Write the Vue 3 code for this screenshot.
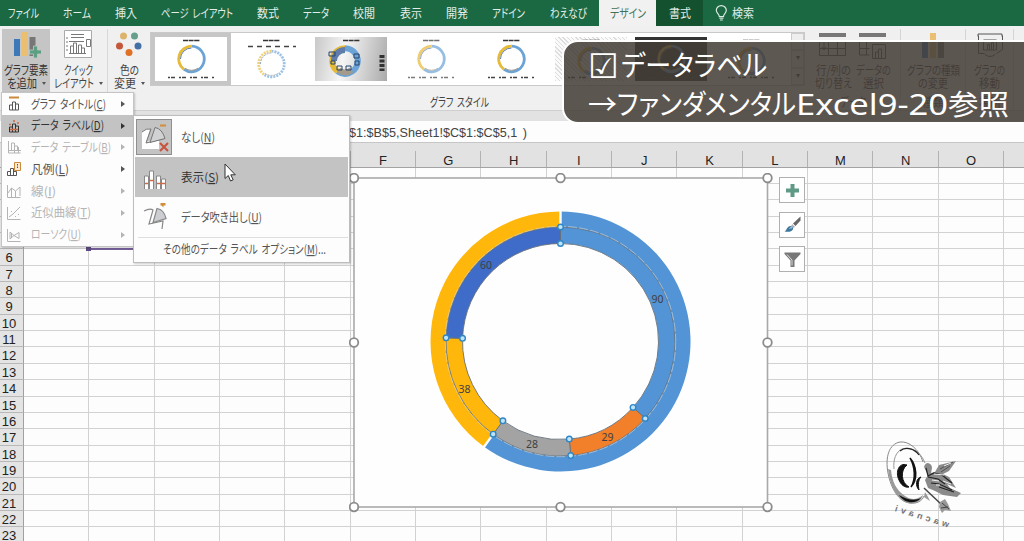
<script setup>
import { h } from 'vue'

/**
 * Texte condensé ou étiré à une largeur fixe, avec touche d'accès soulignée
 */
function FitText(props) {
  const content = [props.text]
  if (props.accel) {
    content.push('(', h('tspan', { 'text-decoration': 'underline' }, props.accel), ')')
  }
  if (props.suffix) content.push(props.suffix)
  return h('svg', { class: 'fit', width: props.w, style: 'height:1.4em;overflow:visible;display:block;flex:none' }, [
    h('text', { x: 0, y: '1.08em', fill: 'currentColor', textLength: props.w, lengthAdjust: 'spacingAndGlyphs' }, content),
  ])
}
FitText.props = ['text', 'w', 'accel', 'suffix']

const tabs = [
  { text: 'ファイル', w: 31 },
  { text: 'ホーム', w: 28 },
  { text: '挿入', w: 22 },
  { text: 'ページ レイアウト', w: 72 },
  { text: '数式', w: 22 },
  { text: 'データ', w: 26 },
  { text: '校閲', w: 22 },
  { text: '表示', w: 22 },
  { text: '開発', w: 22 },
  { text: 'アドイン', w: 33 },
  { text: 'わえなび', w: 37 },
  { text: 'デザイン', w: 36, state: 'active' },
  { text: '書式', w: 22, state: 'context' },
]

const styles = [
  { kind: 'selected', cy: 26 },
  { kind: 'striped', cy: 31 },
  { kind: 'silver', cy: 28 },
  { kind: 'soft', cy: 26 },
  { kind: 'plain', cy: 26 },
  { kind: 'hatched', cy: 28 },
  { kind: 'dark', cy: 26 },
  { kind: 'blue', cy: 28 },
]

const menuItems = [
  { id: 'title', text: 'グラフ タイトル', accel: 'C', w: 75 },
  { id: 'labels', text: 'データ ラベル', accel: 'D', w: 73, active: true },
  { id: 'table', text: 'データ テーブル', accel: 'B', w: 80, disabled: true },
  { id: 'legend', text: '凡例', accel: 'L', w: 38 },
  { id: 'lines', text: '線', accel: 'I', w: 25, disabled: true },
  { id: 'trend', text: '近似曲線', accel: 'T', w: 60, disabled: true },
  { id: 'candle', text: 'ローソク', accel: 'U', w: 50, disabled: true },
]

// Les cinq premières colonnes et lignes sont sous les menus ouverts
const columns = ['', '', '', '', '', ...'FGHIJKLMNO', '']
const rows = Array.from({ length: 23 }, (_, i) => (i < 5 ? '' : i + 1))

// Graphique en anneau : centre et rayons dans le repère du cadre
const cx = 206.5
const cy = 163.5

function point(r, deg) {
  const a = (deg * Math.PI) / 180
  return [cx + r * Math.sin(a), cy - r * Math.cos(a)]
}

function sector(r1, r2, from, to) {
  const large = to - from > 180 ? 1 : 0
  return `M${point(r2, from)} A${r2} ${r2} 0 ${large} 1 ${point(r2, to)} L${point(r1, to)} A${r1} ${r1} 0 ${large} 0 ${point(r1, from)}Z`
}

const values = [
  { v: 90, color: '#5294d5', x: 303.5, y: 121 },
  { v: 29, color: '#f27f2a', x: 253.5, y: 259 },
  { v: 28, color: '#a3a3a3', x: 178, y: 266 },
  { v: 38, color: '#ffb70b', x: 110.5, y: 211 },
  { v: 60, color: '#3f6cc8', x: 132, y: 87 },
]
const total = 245
let start = 0
const slices = values.map((s) => {
  const from = start
  start += (s.v / total) * 360
  return { ...s, from, d: sector(98, 114.5, from, start) }
})
const outer = [
  { d: sector(114.5, 130, 0, 216), color: '#5294d5' },
  { d: sector(114.5, 130, 216, 360), color: '#ffb70b' },
]
const handles = slices.flatMap((s) => [point(98, s.from), point(114.5, s.from)])
const gaps = [0, 216].map((a) => [point(116, a), point(131, a)])
const frameHandles = [
  [0, 0], [206.5, 0], [413.5, 0], [0, 164.5], [413.5, 164.5], [0, 329], [206.5, 329], [413.5, 329],
]
</script>

<template>
  <div class="app">
    <nav class="tabs">
      <div v-for="tab in tabs" :key="tab.text" class="tab" :class="tab.state">
        <FitText :text="tab.text" :w="tab.w" />
      </div>
      <div class="search">
        <svg width="13" height="16" viewBox="0 0 13 16" fill="none" stroke="#dcebe2" stroke-width="1.2">
          <path d="M4.3 11.5C4.3 8.8 1.3 8.300 1.300 5.300a5 4.700 0 0 1 10 0C11.300 8.300 8.500 8.800 8.500 11.500Z" />
          <path d="M4.300 13.200h4.200M5 15h2.800" />
        </svg>
        <FitText text="検索" :w="22" />
      </div>
    </nav>

    <section class="ribbon">
      <div class="big-button pressed">
        <svg width="30" height="30" viewBox="0 0 30 30">
          <path d="M3 10h6v17h-6z" fill="#3d78b8" />
          <path d="M11 3h6v24h-6z" fill="#eabf72" />
          <path d="M18.500 8h6v19h-6z" fill="#777" />
          <path d="M22.500 17h4v4h4v4h-4v4h-4v-4h-4v-4h4z" fill="#5ba081" stroke="#c6c6c6" stroke-width=".8" />
        </svg>
        <FitText text="グラフ要素" :w="44" />
        <div class="line"><FitText text="を追加" :w="30" /><i class="caret"></i></div>
      </div>
      <div class="big-button quick">
        <svg width="30" height="30" viewBox="0 0 30 30" fill="none" stroke="#777">
          <path d="M1.500 1.500h27v27h-27z" fill="#fff" stroke="#aaa" />
          <path d="M8 5.500h13M8 8.500h13" />
          <path d="M4 8v16" stroke-dasharray="2 2" />
          <path d="M6 24.500h17M7.500 24v-7h3v7M10.500 24v-10h3v10M15.500 24v-8h3v8M18.500 24v-5h3v5M6 12.500h15M23.500 10.500h4v7h-4z" />
        </svg>
        <FitText text="クイック" :w="29" />
        <div class="line"><FitText text="レイアウト" :w="40" /><i class="caret"></i></div>
      </div>
      <div class="big-button colors">
        <svg width="30" height="30" viewBox="0 0 30 30">
          <circle cx="9.500" cy="7" r="3.500" fill="#dcb36c" />
          <circle cx="20.500" cy="7" r="3.500" fill="#66a08d" />
          <circle cx="5.500" cy="17" r="3.500" fill="#c4583a" />
          <circle cx="24" cy="17" r="3.500" fill="#4470a5" />
          <circle cx="15" cy="23.500" r="3.500" fill="#df7125" />
        </svg>
        <FitText text="色の" :w="19" />
        <div class="line"><FitText text="変更" :w="22" /><i class="caret"></i></div>
      </div>
      <div class="gallery-group">
        <div class="gallery">
          <div v-for="s in styles" :key="s.kind" class="thumb" :class="s.kind">
            <svg width="80" height="52" viewBox="0 0 80 52" fill="none">
              <path d="M32 7.500h17" stroke="#333" stroke-width="1.600" stroke-dasharray="5 .6" />
              <path v-if="s.kind === 'silver'" d="M71 22v16" stroke="#333" stroke-width="5" stroke-dasharray="3 1.500" />
              <path v-else-if="s.kind === 'striped'" d="M17 13.500h48" stroke="#444" stroke-width="1.500" stroke-dasharray="5 4" />
              <path v-else d="M17 44.500h47" stroke="#444" stroke-width="1.500" stroke-dasharray="2 1 4 4" />
              <g class="ring" :transform="`translate(${s.kind === 'silver' ? 34 : 40.500} ${s.cy})`">
                <path d="M0-12.800A12.800 12.800 0 1 1-7.500 10.400" stroke="#6ba3d6" stroke-width="2.800" />
                <path d="M-7.500 10.400A12.800 12.800 0 0 1 0-12.800" stroke="#e6b936" stroke-width="2.800" />
                <path d="M-11 0A11 11 0 0 1 0-11" stroke="#5f7cab" stroke-width="1" />
                <path d="M-6.500 9.200A11 11 0 0 0 6.500 9.200" stroke="#a39a8a" stroke-width="1" />
              </g>
              <g v-if="s.kind === 'silver'" stroke="#26446b" stroke-width="1">
                <path d="M18 19h6v4h-6zM43 21h5v4h-5zM48 28h-4v4h4zM35 33h5v4h-5zM26 33h5v4h-5zM20 28h4v3h-4z" />
              </g>
            </svg>
          </div>
          <div class="scroller"><span></span><span>▾</span><span>▾</span></div>
        </div>
        <FitText class="group-name" text="グラフ スタイル" :w="59" />
      </div>
      <div class="group data-group">
        <div class="group-row">
          <div class="big-button">
            <svg width="30" height="30" viewBox="0 0 30 30" fill="none" stroke="#555">
              <path d="M1 4h27v4h-27z" fill="#777" stroke="none" />
              <path d="M1.500 12.500h26v14h-26zM1.500 19.500h26M10.500 12.500v14M19.500 12.500v14M6 13v8l-2-3m2 3 2-3" />
            </svg>
            <FitText text="行/列の" :w="35" />
            <FitText text="切り替え" :w="37" />
          </div>
          <div class="big-button">
            <svg width="30" height="30" viewBox="0 0 30 30" fill="none" stroke="#555">
              <path d="M1 4h27v4h-27z" fill="#777" stroke="none" />
              <path d="M1.500 12v14h10M1.500 19.500h10M8.500 12v14M14.500 15.500h13v14h-13zM17.500 29v-6h3v6M20.500 29v-9h3v9" />
            </svg>
            <FitText text="データの" :w="35" />
            <FitText text="選択" :w="21" />
          </div>
        </div>
        <FitText class="group-name" text="データ" :w="26" />
      </div>
      <div class="group type-group">
        <div class="big-button">
          <svg width="30" height="30" viewBox="0 0 30 30">
            <path d="M4 12h6v17h-6z" fill="#3d78b8" />
            <path d="M12 4h6v25h-6z" fill="#eabf72" />
            <path d="M20 12h6v17h-6z" fill="#777" />
          </svg>
          <FitText text="グラフの種類" :w="53" />
          <FitText text="の変更" :w="30" />
        </div>
        <FitText class="group-name" text="種類" :w="22" />
      </div>
      <div class="group place-group">
        <div class="big-button">
          <svg width="30" height="30" viewBox="0 0 30 30" fill="none" stroke="#555">
            <path d="M3 7.500v-2.500h24v2.500M3.500 6.500v18h6M27.500 6.500v14l-6 4M8.500 11h13v10h-13zM12.500 20.500v-5h2v5M16.500 20.500v-7h2v7M10 25.500q5 4 10 0" />
          </svg>
          <FitText text="グラフの" :w="31" />
          <FitText text="移動" :w="21" />
        </div>
        <FitText class="group-name" text="場所" :w="22" />
      </div>
    </section>

    <div class="formula-bar">
      <FitText text="$1:$B$5,Sheet1!$C$1:$C$5,1 )" :w="178" />
    </div>

    <main class="sheet">
      <div class="row col-heads">
        <div class="row-head"></div>
        <div v-for="(c, i) in columns" :key="i" class="col-head">{{ c }}</div>
      </div>
      <div v-for="(r, j) in rows" :key="j" class="row">
        <div class="row-head">{{ r }}</div>
        <div v-for="(c, i) in columns" :key="i" class="cell"></div>
      </div>
      <div class="range-edge"></div>

      <svg class="chart" width="424" height="340" viewBox="-5 -5 424 340">
        <rect x="0" y="0" width="413.500" height="329" fill="#fefefe" stroke="#a9a9a9" stroke-width="1.600" />
        <path v-for="o in outer" :key="o.color" :d="o.d" :fill="o.color" />
        <path v-for="s in slices" :key="s.v" :d="s.d" :fill="s.color" stroke="#66727c" stroke-width=".9" />
        <circle :cx="cx" :cy="cy" r="115.200" class="dash" />
        <line v-for="(g, i) in gaps" :key="i" :x1="g[0][0]" :y1="g[0][1]" :x2="g[1][0]" :y2="g[1][1]" stroke="#fff" stroke-width="2.400" />
        <circle v-for="(p, i) in handles" :key="'h' + i" :cx="p[0]" :cy="p[1]" r="2.800" class="point" />
        <text v-for="s in slices" :key="'t' + s.v" :x="s.x" :y="s.y + 3.500" class="value">{{ s.v }}</text>
        <circle v-for="(p, i) in frameHandles" :key="'f' + i" :cx="p[0]" :cy="p[1]" r="4.300" class="grip" />
      </svg>

      <div class="chart-tools">
        <div class="tool">
          <svg width="17" height="17" viewBox="0 0 17 17"><path d="M6.500 2h4v4.500H15v4h-4.500V15h-4v-4.500H2v-4h4.500z" fill="#5f9a86" /></svg>
        </div>
        <div class="tool">
          <svg width="17" height="17" viewBox="0 0 17 17">
            <path d="M16.500.5v4L11.500 10 9 7.500z" fill="#666" />
            <path d="M8.300 8.200l2.500 2.500-1 1.200-2.600-2.500z" fill="#aaa" />
            <path d="M.5 15.500C3 14.500 2.500 10.500 6.500 10c2 .3 3 2 2.500 3.200-1.500 3-5 2.800-8.500 2.300z" fill="#3e789f" />
            <path d="M5.500 12.500q1.500-1.500 2.500-.5" stroke="#d5e5ef" fill="none" />
          </svg>
        </div>
        <div class="tool">
          <svg width="17" height="17" viewBox="0 0 17 17">
            <path d="M.5 1.500h16v1.500L10.500 9.500V16h-4V9.500L.5 3z" fill="#777" />
            <path d="M3 3.500l5 5.500v5.500" stroke="#ddd" fill="none" />
          </svg>
        </div>
      </div>

      <svg class="logo" width="80" height="95" viewBox="0 0 80 95" fill="none">
        <path d="M41 24C37 11 27 3 18 4C7 6 3 19 6 35C9 51 17 64 28 65C35 66 40 63 42 58" stroke="#888" stroke-width="1" />
        <path d="M6 31C8 50 17 64 28 65.500C35 66 40 62 41 57C35 62 29 62 23 58C14 52 10 43 9 32Z" fill="#999" />
        <path d="M17 57C22 65 33 67 39 60C33 63 25 62 17 57Z" fill="#111" />
        <path d="M43 25C39 14 29 8 20 11C14 14 11 21 12 31" stroke="#999" stroke-width="1" />
        <path d="M18 13C24 8 33 11 37 17" stroke="#222" stroke-width="1.300" />
        <path d="M25 27C17 24 13 34 17 42C19 47 23 50 27 49C19 45 18 32 25 27Z" fill="#111" stroke="#111" />
        <path d="M28 20C35 28 36 42 29 49C34 41 33 29 28 20Z" fill="#111" stroke="#111" stroke-width="1.500" />
        <path d="M39 39C34 40 33 48 37 52C36 47 36 42 39 39Z" fill="#111" stroke="#111" />
        <path d="M42 29q1-4 4-4 4 1 4 5l-1 5 4-1 4-7 17-4-7 10-6 3 6 3 7 11-9-4 3 4 11 5-4 4-14-2-8-4-7-3-3-8 3-5z" fill="#8a8a8a" />
        <path d="M44 30l2 8 6-3 8 2 10 8M46 39l10 2 7 5M49 45l8 1 13 6M57 49l15 5" stroke="#222" stroke-width="1.200" />
        <path d="M58 31l13-7M59 34l9-6" stroke="#444" stroke-width=".8" />
        <path d="M52 36l10 1M50 42l7 1M61 43l8 3M54 47l4 0M62 28l7-3" stroke="#eee" />
        <path d="M42 50L60 67" stroke="#444" stroke-width="1.500" />
        <path d="M43 54l3 5 2 4-6-4zM58 64l5-3 3 5 3 7-6-1-3 3-3-6z" fill="#999" />
        <path d="M60 65l7 6M59 70l7-1" stroke="#444" />
        <text transform="translate(66 89.500) rotate(17) scale(-1 1)" textLength="56" class="logo-text">wacnavi</text>
      </svg>
    </main>

    <div class="menu">
      <div v-for="m in menuItems" :key="m.id" class="menu-item" :class="{ active: m.active, disabled: m.disabled }">
        <svg width="16" height="16" viewBox="0 0 16 16" fill="none" stroke="currentColor">
          <template v-if="m.id === 'title'">
            <path d="M3 1.500h10" stroke="#c98a3c" stroke-width="2" />
            <path d="M3.500 14v-5h3v5zM6.500 14v-8h3v8zM9.500 14v-6h3v6z" />
          </template>
          <template v-else-if="m.id === 'labels'">
            <path d="M3.500 14v-5h3v5zM6.500 14v-8h3v8zM9.500 14v-6h3v6z" />
            <path d="M3 6.500h2M7 3h2M11 5h2M4 11.500h8" stroke="#c96a3c" stroke-width="1.500" />
          </template>
          <path v-else-if="m.id === 'table'" d="M2.500 2v12h12M5.500 11v-7h3v7M8.500 11v-4h3v4M2 11.500h13M12.500 8v6M8.500 11v3" />
          <template v-else-if="m.id === 'legend'">
            <path d="M8.500 1.500h6v8h-6z" stroke="#c98a3c" fill="#fbe9d2" />
            <path d="M11.500 3v5" stroke-dasharray="1.500 1" />
            <path d="M1.500 14.500v-4h3v4zM4.500 14.500v-7h3v7zM7.500 14.500v-4h3v4z" fill="#fff" />
          </template>
          <path v-else-if="m.id === 'lines'" d="M1.500 2v12.500h13M2 10l3.500-5 4 3 4.500-4v9M5.500 5v9M9.500 8v6" />
          <path v-else-if="m.id === 'trend'" d="M1.500 2v12.500h13M3 12l4-3 7-7M5 6.500h1M9 11.500h1M12 9.500h1" />
          <path v-else d="M1.500 2v12.500h13M4 5v7l4-3.500zM8 8.500l5-3v6zM5.500 6v5" />
        </svg>
        <FitText :text="m.text" :accel="m.accel" :w="m.w" />
        <i class="arrow"></i>
      </div>
    </div>

    <div class="submenu">
      <div class="sub-item">
        <div class="sub-icon checked">
          <svg width="32" height="32" viewBox="0 0 32 32" fill="none">
            <path d="M4 28v-17q4-4 8-3l-4 13 13-3v10z" fill="#fff" />
            <path d="M4 11q4-4 9-3l-5 14 17-4" stroke="#777" />
            <path d="M17 6.500q7 1 10 11l-15 4z" fill="#d0d2d4" stroke="#777" />
            <path d="M22 4.500h6" stroke="#d08d3c" stroke-width="2" />
            <path d="M22 22l8 8M30 22l-8 8" stroke="#c9513b" stroke-width="2" />
          </svg>
        </div>
        <FitText text="なし" accel="N" :w="34" />
      </div>
      <div class="sub-item active">
        <div class="sub-icon">
          <svg width="32" height="32" viewBox="0 0 32 32" fill="#fff" stroke="#888">
            <path d="M6.500 28v-13h4v13M11.500 28v-18h4v18M18.500 28v-13h4v13M23.500 28v-10h4v10" />
            <path d="M7 22.500h3M11 19.500h5M19 22.500h9" stroke="#cf6c45" stroke-width="1.500" />
          </svg>
        </div>
        <FitText text="表示" accel="S" :w="38" />
      </div>
      <div class="sub-item">
        <div class="sub-icon">
          <svg width="32" height="32" viewBox="0 0 32 32" fill="none" stroke="#888" stroke-width="1.200">
            <path d="M6 10q6-3 9-1l-4 14 14-3-1 8" />
            <path d="M19 7.500q7 1 9 10l-13 4z" fill="#ccced1" />
            <path d="M22.500 2h5v2.500h-2v2l-2-2h-1z" fill="#d08d3c" stroke="none" />
          </svg>
        </div>
        <FitText text="データ吹き出し" accel="U" :w="81" />
      </div>
      <div class="more">
        <FitText text="その他のデータ ラベル オプション" accel="M" suffix="..." :w="163" />
      </div>
    </div>

    <svg class="cursor" width="13" height="20" viewBox="0 0 13 20">
      <path d="M1 1v14.500l3.300-3L6.500 18l2.700-1.200-2.400-5h4.500z" fill="#fff" stroke="#333" />
    </svg>

    <div class="banner">
      <div class="line"><FitText class="check" text="☑" :w="31" /><FitText text="データラベル" :w="146" /></div>
      <div class="line">
        <FitText class="to" text="→" :w="29" />
        <FitText text="ファンダメンタル" :w="179" />
        <FitText class="latin" text="Excel9-20" :w="152" />
        <FitText text="参照" :w="61" />
      </div>
    </div>
  </div>
</template>

<style>
body {
  overflow: hidden;
}
</style>

<style scoped>
.app {
  position: relative;
  display: flex;
  flex-direction: column;
  width: 1024px;
  height: 541px;
  overflow: hidden;
  background: #fdfdfd;
  color: #444;
  font-family: 'Noto Sans CJK JP', sans-serif;
  font-size: 12px;
  font-feature-settings: 'palt';
  word-spacing: 2px;
}

.tabs {
  display: grid;
  grid-template-columns: 51px 52px 46px 96px 46px 50px 46px 47px 46px 57px 62px 57px 47px 1fr;
  flex: none;
  height: 26px;
  background: #1a6943;
  color: #e3eee8;
}

.tab {
  display: flex;
  align-items: center;
  justify-content: center;
}

.tab:first-child {
  padding-right: 4px;
}

.tab.active {
  background: #f1f1f1;
  color: #3f7258;
}

.tab.context {
  background: #14522f;
}

.search {
  display: flex;
  align-items: center;
  gap: 4px;
  padding-left: 12px;
}

.ribbon {
  display: flex;
  box-sizing: border-box;
  flex: none;
  height: 85px;
  padding: 3px 0 0 2px;
  border-bottom: 1px solid #cfcfcf;
  background: #f0f0f0;
}

.big-button {
  display: flex;
  flex-direction: column;
  align-items: center;
  height: 63px;
}

.big-button > svg:first-child {
  margin-bottom: 3px;
  flex: none;
}

.big-button > .fit + .fit,
.big-button > .line {
  margin-top: -4px;
}

.line {
  display: flex;
  align-items: center;
}

.pressed {
  width: 48px;
  background: #c5c5c5;
  color: #333;
}

.quick {
  width: 56px;
  padding-right: 1px;
  border-right: 1px solid #d8d8d8;
}

.colors {
  width: 42px;
}

.caret {
  margin-left: 5px;
  border: 2.500px solid transparent;
  border-top: 3px solid #555;
  border-bottom: 0;
}

.gallery-group {
  display: flex;
  flex-direction: column;
  align-items: center;
  width: 655px;
  padding-top: 3px;
}

.gallery {
  display: flex;
  box-sizing: border-box;
  width: 655px;
  height: 54px;
  border: 1px solid #c9c9c9;
  background: #fff;
  margin-bottom: 8px;
}

.gallery-group > .group-name {
  margin-right: 37px;
}

.thumb {
  box-sizing: border-box;
  width: 80px;
  height: 52px;
  flex: none;
}

.thumb svg {
  display: block;
}

.selected {
  box-shadow: inset 0 0 0 4px #c6c6c6;
}

.silver {
  background: linear-gradient(100deg, #c8c8c8, #f5f5f5 40%, #aaa) 4px 4px / 72px 44px no-repeat;
}

.striped .ring {
  opacity: 0.65;
  stroke-dasharray: 2 1;
}

.soft svg {
  opacity: 0.7;
}

.silver .ring path {
  stroke-width: 6px;
}

.hatched {
  background: repeating-linear-gradient(45deg, #ddd 0 1px, #fafafa 1px 3px) 4px 4px / 72px 44px no-repeat;
}

.dark {
  background: linear-gradient(#333, #333) 4px 4px / 72px 44px no-repeat;
}

.scroller {
  display: flex;
  flex-direction: column;
  width: 13px;
  font-size: 8px;
}

.scroller span {
  flex: 1;
  border: 1px solid #ccc;
  background: #eee;
  text-align: center;
}

.group {
  display: flex;
  flex-direction: column;
  align-items: center;
  justify-content: space-between;
  height: 82px;
  border-right: 1px solid #d5d5d5;
}

.group-row {
  display: flex;
  gap: 4px;
}

.data-group {
  width: 95px;
}

.type-group {
  width: 64px;
}

.place-group {
  width: 47px;
}

.formula-bar {
  box-sizing: border-box;
  flex: none;
  height: 32px;
  padding: 2px 0 0 349px;
  border-top: 10px solid #e2e2e2;
  border-bottom: 1px solid #c6c6c6;
  background: #fdfdfd;
  font-family: 'Liberation Sans', sans-serif;
  font-size: 12.500px;
}

.sheet {
  position: relative;
  flex: none;
}

.row {
  display: flex;
  width: 1080px;
  height: 16.360px;
}

.col-heads {
  height: 24.500px;
  background: #e2e2e2;
  border-bottom: 1px solid #a3a3a3;
  box-sizing: border-box;
}

.row-head {
  box-sizing: border-box;
  width: 24px;
  padding: 1px 5px 0 0;
  border-right: 1px solid #a0a0a0;
  border-bottom: 1px solid #b8b8b8;
  background: #e3e4e3;
  color: #222;
  font: 13px/16px 'Liberation Sans', sans-serif;
  text-align: center;
}

.col-heads .row-head {
  border: 0;
}

.col-head,
.cell {
  box-sizing: border-box;
  width: 65.350px;
  border-right: 1px solid #d2d2d2;
}

.cell {
  border-bottom: 1px solid #d2d2d2;
}

.col-head {
  padding-top: 8px;
  border-right: 1px solid;
  border-image: linear-gradient(transparent 35%, #b2b2b2 35%) 1;
  color: #222;
  font: 13px/20px 'Liberation Sans', sans-serif;
  text-align: center;
}

.range-edge {
  position: absolute;
  top: 105px;
  left: 86px;
  width: 60px;
  height: 2px;
  background: #76609a;
}

.range-edge::before {
  content: '';
  position: absolute;
  top: -1px;
  left: 0;
  width: 5px;
  height: 4px;
  background: #5c4a80;
}

.chart {
  position: absolute;
  top: 30px;
  left: 349px;
}

.dash {
  fill: none;
  stroke: #d8dee2;
  stroke-width: 0.7px;
  stroke-dasharray: 9 2;
  opacity: 0.8;
}

.point {
  fill: #bfe4f7;
  stroke: #2f86c6;
  stroke-width: 1.400px;
}

.value {
  fill: #404040;
  font: 10.500px 'Noto Sans', sans-serif;
  text-anchor: middle;
}

.grip {
  fill: #fff;
  stroke: #8c8c8c;
  stroke-width: 1.800px;
}

.chart-tools {
  position: absolute;
  top: 34px;
  left: 779px;
  display: flex;
  flex-direction: column;
  gap: 8.500px;
}

.tool {
  display: flex;
  align-items: center;
  justify-content: center;
  width: 24px;
  height: 24px;
  border: 1px solid #b0b0b0;
  background: #fff;
}

.logo {
  position: absolute;
  top: 295px;
  left: 882px;
}

.logo-text {
  fill: #777;
  font: bold 9px 'Liberation Sans', sans-serif;
}

.menu {
  position: absolute;
  top: 92px;
  left: 1px;
  width: 131px;
  border: 1px solid #c4c4c4;
  background: #fdfdfd;
  box-shadow: 1px 1px 2px rgba(0, 0, 0, 0.2);
  color: #555;
}

.menu-item {
  display: flex;
  align-items: center;
  height: 21.800px;
  padding-left: 4px;
}

.menu-item > svg:first-child {
  flex: none;
  margin-right: 9px;
}

.menu-item.active,
.sub-item.active {
  background: #c3c3c3;
  color: #333;
}

.menu-item.disabled {
  color: #b4b4b4;
}

.arrow {
  margin: 0 8px 0 auto;
  border: 3px solid transparent;
  border-left: 4px solid currentColor;
  border-right: 0;
}

.submenu {
  position: absolute;
  top: 115px;
  left: 133px;
  box-sizing: border-box;
  width: 217px;
  height: 148px;
  padding: 1px;
  border: 1px solid #bdbdbd;
  background: #fdfdfd;
  box-shadow: 1px 1px 2px rgba(0, 0, 0, 0.2);
  color: #555;
}

.sub-item {
  display: flex;
  align-items: center;
  gap: 9px;
  height: 40px;
  padding-left: 1px;
}

.sub-icon {
  padding: 2px;
  line-height: 0;
}

.checked {
  padding: 1px;
  border: 1px solid #8f8f8f;
  background: #c3c3c3;
}

.more {
  display: flex;
  align-items: center;
  height: 23px;
  margin-left: 3px;
  padding-left: 25px;
  border-top: 1px solid #dedede;
}

.cursor {
  position: absolute;
  top: 163px;
  left: 224px;
}

.banner {
  position: absolute;
  top: 40px;
  left: 562px;
  box-sizing: border-box;
  width: 480px;
  height: 84px;
  padding: 3px 0 0 24px;
  border: 2px solid #fff;
  border-radius: 16px;
  background: rgba(67, 60, 55, 0.86);
  color: #fff;
  font-size: 28.500px;
}

.banner .line {
  height: 39px;
}

.banner .check {
  margin-right: 2px;
  font-family: 'DejaVu Sans', sans-serif;
  font-size: 34px;
}

.banner .latin {
  font-family: 'Noto Sans', sans-serif;
  font-size: 29.500px;
}

.banner .to {
  font-family: 'Noto Sans CJK JP', sans-serif;
}
</style>
